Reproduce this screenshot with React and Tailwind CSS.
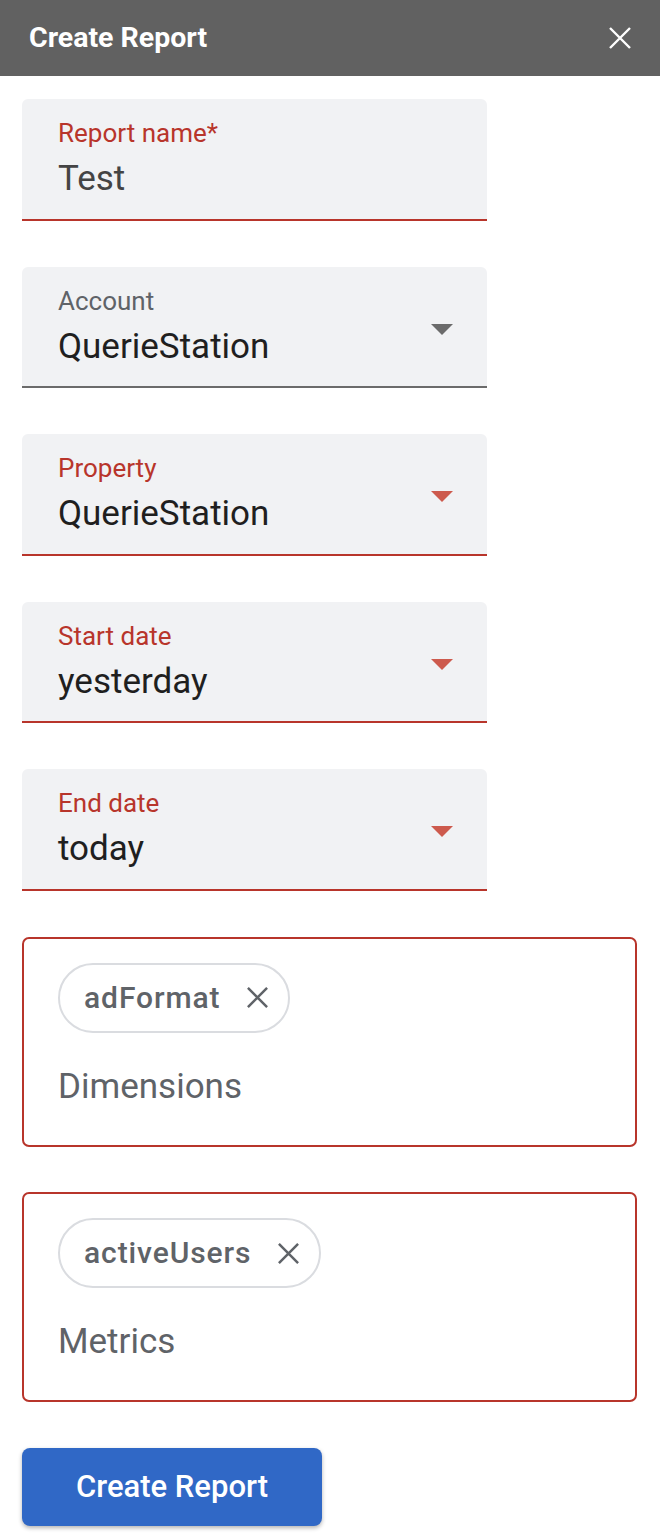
import React from 'react'

function Flecha({ rojo }) {
  return (
    <div className={`w-0 h-0 border-l-[11px] border-r-[11px] border-t-[11px] border-l-transparent border-r-transparent ${rojo ? 'border-t-[#cd5a4d]' : 'border-t-[#6b6b6b]'}`} />
  )
}

function Equis({ className, grosor = 2.4 }) {
  return (
    <svg viewBox="0 0 24 24" className={className} fill="none" stroke="currentColor" strokeWidth={grosor} strokeLinecap="butt">
      <path d="M2 2 L22 22 M22 2 L2 22" />
    </svg>
  )
}

function Campo({ etiqueta, valor, rojo = true, select = true, gris = false }) {
  return (
    <div className={`h-[121.5px] rounded-t-[6px] bg-[#f1f2f4] border-b-2 ${rojo ? 'border-[#b8352b]' : 'border-[#6b6b6b]'} pl-[36px] pr-[34px] pt-[19px] flex items-start`}>
      <div className="flex-1">
        <p className={`text-[26px] leading-[30px] ${rojo ? 'text-[#b8352b]' : 'text-[#5f6368]'}`}>{etiqueta}</p>
        <p className={`text-[35px] leading-[41px] mt-[10px] ${gris ? 'text-[#444444]' : 'text-[#1f1f1f]'}`}>{valor}</p>
      </div>
      {select && (
        <div className="mt-[38px]">
          <Flecha rojo={rojo} />
        </div>
      )}
    </div>
  )
}

function Chips({ chip, etiqueta }) {
  return (
    <div className="h-[210px] rounded-[7px] border-2 border-[#b8352b] pl-[34px] pt-[24px]">
      <div className="inline-flex items-center h-[70px] rounded-full border-2 border-[#dadce0] pl-[24px] pr-[19px]">
        <span className="text-[30px] font-medium tracking-[0.9px] text-[#5f6368] leading-none">{chip}</span>
        <Equis className="w-[23px] h-[23px] ml-[26px] text-[#5f6368]" grosor={2.6} />
      </div>
      <p className="text-[35px] leading-[41px] text-[#5f6368] mt-[33px]">{etiqueta}</p>
    </div>
  )
}

export default function App() {
  return (
    <div className="w-[660px] h-[1536px] overflow-hidden bg-white font-['Roboto',sans-serif]">
      <div className="h-[76px] bg-[#616161] flex items-center justify-between pl-[29px] pr-[28px]">
        <h1 className="text-[28.5px] font-bold text-white">Create Report</h1>
        <Equis className="w-[24px] h-[24px] text-white" grosor={2.4} />
      </div>

      <div className="px-[22px] pt-[23px]">
        <div className="w-[465px] flex flex-col gap-[46px]">
          <Campo etiqueta="Report name*" valor="Test" select={false} gris />
          <Campo etiqueta="Account" valor="QuerieStation" rojo={false} />
          <Campo etiqueta="Property" valor="QuerieStation" />
          <Campo etiqueta="Start date" valor="yesterday" />
          <Campo etiqueta="End date" valor="today" />
        </div>

        <div className="w-[615px] flex flex-col gap-[45.5px] mt-[46px]">
          <Chips chip="adFormat" etiqueta="Dimensions" />
          <Chips chip="activeUsers" etiqueta="Metrics" />
        </div>

        <button className="mt-[46px] w-[300px] h-[78px] rounded-[8px] bg-[#3068c6] text-white text-[31px] font-medium shadow-[0_2px_4px_rgba(0,0,0,0.3)]">
          Create Report
        </button>

        <p className="mt-[4px] pl-[52px] text-[26px] text-[#4a5bd4]">Learn about dimensions and metrics</p>
      </div>
    </div>
  )
}
